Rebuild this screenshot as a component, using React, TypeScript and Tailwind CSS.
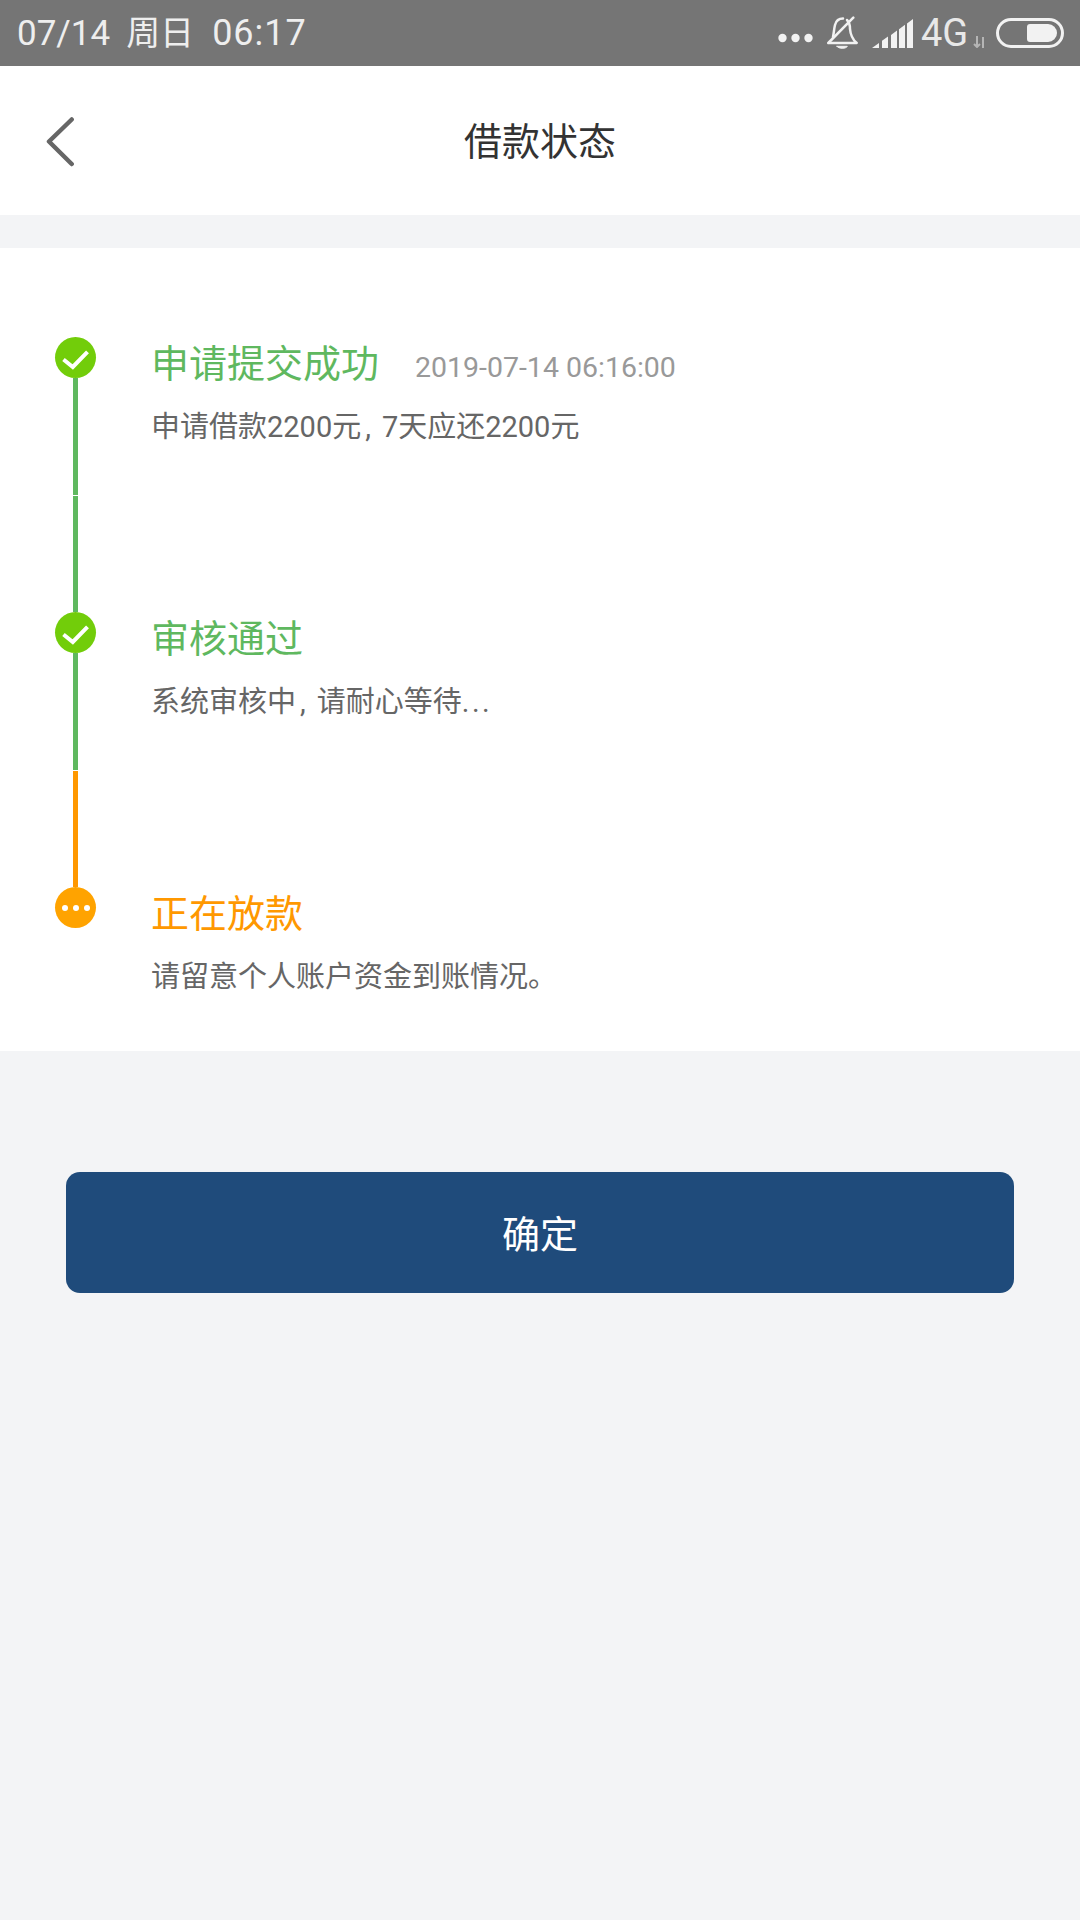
import React from 'react';

const CJK = "font-['Roboto','Noto_Sans_CJK_SC',sans-serif]";

const StatusIcons: React.FC = () => (
  <div className="flex items-center">
    <svg width="36" height="12" viewBox="0 0 36 12" className="mt-[9px]">
      <circle cx="4.5" cy="6" r="4.2" fill="#f2f2f2" />
      <circle cx="17.5" cy="6" r="4.2" fill="#f2f2f2" />
      <circle cx="30.500" cy="6" r="4.2" fill="#f2f2f2" />
    </svg>
    <svg width="34" height="34" viewBox="0 0 34 34" fill="none" stroke="#f2f2f2" strokeWidth="2.500" strokeLinecap="round" strokeLinejoin="round" className="ml-[12px]">
      <path d="M7 21C8 16 8 13 9 9 10 5 13 2.500 17 2.500" />
      <path d="M21 4c2 2 3 5 3 9 .5 6 2 10 6.700 14H3.300" />
      <path d="M2.300 27 27.300 1.700" />
      <path d="M11 30.300h10.300c-1 2.700-9.300 2.700-10.300 0z" fill="#f2f2f2" strokeWidth="1" />
    </svg>
    <svg width="41" height="30" viewBox="0 0 41 30" fill="#f2f2f2" className="ml-[12px] mt-[2px]">
      <path d="M0 29 7 24V29Z" />
      <path d="M10 21.800 16 17.400V29H10Z" />
      <path d="M19 16 25 11.600V29H19Z" />
      <path d="M27 10.200 33 5.800V29H27Z" />
      <path d="M35 4.400 41 0V29H35Z" />
    </svg>
    <span className="ml-[8px] w-[46px] text-[38px] leading-none text-[#e8e8e8]">4G</span>
    <svg width="14" height="12" viewBox="0 0 14 12" fill="none" stroke="#b5b5b5" strokeWidth="2" className="ml-[6px] mt-[17px]">
      <path d="M4 0v11M1 8l3 3 3-3" />
      <path d="M10 12V1" />
    </svg>
    <div className="ml-[9px] flex h-[30px] w-[68px] items-center justify-end rounded-full border-[3px] border-[#f2f2f2] pr-[4px]">
      <div className="h-[18px] w-[30px] rounded-l-[3px] rounded-r-[9px] bg-[#f2f2f2]" />
    </div>
  </div>
);

const Check: React.FC = () => (
  <div className="flex h-[41px] w-[41px] shrink-0 items-center justify-center rounded-full bg-[#72cd0a]">
    <svg width="41" height="41" viewBox="0 0 41 41" fill="none" stroke="#ffffff" strokeWidth="4">
      <path d="M8.500 22.500 17.800 30 32.500 14.800" />
    </svg>
  </div>
);

const Dots: React.FC = () => (
  <div className="flex h-[41px] w-[41px] shrink-0 items-center justify-center gap-[5px] rounded-full bg-[#ffa300]">
    <div className="h-[6px] w-[6px] rounded-full bg-white" />
    <div className="h-[6px] w-[6px] rounded-full bg-white" />
    <div className="h-[6px] w-[6px] rounded-full bg-white" />
  </div>
);

// the comma in the reference is narrower than a full CJK cell
const Comma: React.FC = () => <span className="ml-[4px] mr-[11px]">,</span>;

interface StepProps {
  icon: React.ReactNode;
  title: string;
  time?: string;
  desc: React.ReactNode;
  titleColor: string;
  line?: React.ReactNode;
}

const Step: React.FC<StepProps> = ({ icon, title, time, desc, titleColor, line }) => (
  <div className="flex">
    <div className="flex w-[41px] flex-col items-center">
      {icon}
      {line}
    </div>
    <div className="ml-[55px] pt-[2px]">
      <div className="flex h-[50px] items-baseline">
        <span className={`text-[38px] leading-[50px] ${titleColor}`}>{title}</span>
        {time && <span className="ml-[36px] text-[28.500px] leading-none text-[#999999]">{time}</span>}
      </div>
      <div className="mt-[19px] text-[29px] leading-[38px] text-[#666666]">{desc}</div>
    </div>
  </div>
);

const App: React.FC = () => {
  return (
    <div className={`flex min-h-[1920px] w-[1080px] flex-col bg-[#f3f4f6] ${CJK}`}>
      <div className="flex h-[66px] items-center justify-between bg-[#757575] pl-[17px] pr-[16px]">
        <div className="flex items-center text-[36px] leading-none text-[#eeeeee]">
          <span className="text-[35px]">07/14</span>
          <span className="ml-[16px] text-[34px]">周日</span>
          <span className="ml-[18px] tracking-[1px]">06:17</span>
        </div>
        <StatusIcons />
      </div>

      <div className="grid h-[149px] grid-cols-[1fr_auto_1fr] items-center bg-white">
        <svg width="30" height="52" viewBox="0 0 30 52" fill="none" stroke="#666666" strokeWidth="4.500" strokeLinecap="round" strokeLinejoin="round" className="ml-[46px]">
          <path d="M25.700 4.500 3 26.500 25.700 49" />
        </svg>
        <div className="pt-[3px] text-[38px] text-[#333333]">借款状态</div>
        <div />
      </div>

      <div className="mt-[33px] h-[803px] bg-white pl-[55px] pt-[89px]">
        <Step
          icon={<Check />}
          title="申请提交成功"
          time="2019-07-14 06:16:00"
          titleColor="text-[#5fb85f]"
          desc={<>申请借款2200元<Comma />7天应还2200元</>}
          line={
            <div className="flex flex-col">
              <div className="h-[117px] w-[5px] bg-[#5fb85f]" />
              <div className="mt-[1px] h-[116px] w-[5px] bg-[#5fb85f]" />
            </div>
          }
        />
        <Step
          icon={<Check />}
          title="审核通过"
          titleColor="text-[#5fb85f]"
          desc={<>系统审核中<Comma />请耐心等待<span className="tracking-[2.500px]">...</span></>}
          line={
            <div className="flex flex-col">
              <div className="h-[117px] w-[5px] bg-[#5fb85f]" />
              <div className="mt-[1px] h-[116px] w-[5px] bg-[#ff9800]" />
            </div>
          }
        />
        <Step
          icon={<Dots />}
          title="正在放款"
          titleColor="text-[#ff9800]"
          desc="请留意个人账户资金到账情况。"
        />
      </div>

      <div className="mx-[66px] mt-[121px] flex h-[121px] items-center justify-center rounded-[14px] bg-[#1f4b7b] pt-[5px] text-[38px] text-white">
        确定
      </div>
    </div>
  );
};

export default App;
